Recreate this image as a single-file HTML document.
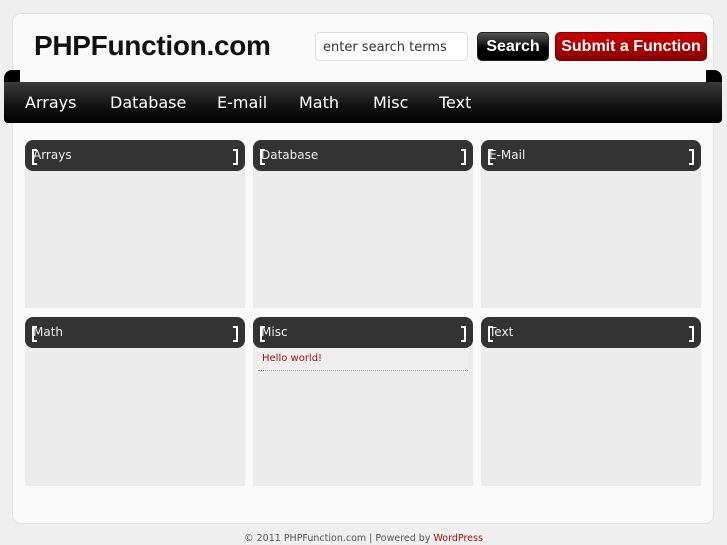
<!DOCTYPE html>
<html><head><style>
*{margin:0;padding:0;box-sizing:border-box}
body{width:727px;height:545px;background:#efefef;font-family:"DejaVu Sans","Liberation Sans",sans-serif;position:relative;overflow:hidden}
.wrap{position:absolute;left:12px;top:13px;width:702px;height:511px;background:#fafafa;border:1px solid #e2e2e2;border-radius:9px}
.logo{position:absolute;left:34px;top:30px;font-family:"Liberation Sans",sans-serif;font-size:28px;font-weight:bold;color:#111;letter-spacing:-0.3px}
.search{position:absolute;left:315px;top:32px;width:153px;height:29px;background:#fff;border:1px solid #ddd;border-radius:4px;font-size:13px;color:#333;padding:7px 0 0 7px}
.btn{position:absolute;top:32px;height:29px;border-radius:5px;color:#fff;font-weight:bold;font-size:16px;text-align:center;line-height:28px;font-family:"Liberation Sans",sans-serif;white-space:nowrap}
.b1{left:477px;width:72px;background:linear-gradient(#555,#000 60%);border:1px solid #222}
.b2{left:555px;width:152px;background:linear-gradient(#c00,#800);border:1px solid #700}
.flap{position:absolute;top:70px;height:20px;width:16px;background:#000}
.nav{position:absolute;left:4px;top:82px;width:718px;height:41px;background:linear-gradient(#3a3a3a,#111 60%,#000);border-radius:0 0 4px 4px}
.nav span{position:absolute;top:11px;color:#fff;font-size:16px}
.p{position:absolute;width:220px;background:#ececec;border-radius:8px 8px 0 0}
.h{height:31px;background:#333;border-radius:8px;color:#eee;font-size:12px;padding:8px 0 0 8px;position:relative}
.h:before{content:"";position:absolute;left:7px;top:9px;width:3px;height:12px;border:2px solid #fff;border-right:none}
.h:after{content:"";position:absolute;right:7px;top:9px;width:3px;height:12px;border:2px solid #fff;border-left:none}
</style></head><body>
<div class="wrap"></div>
<div class="logo">PHPFunction.com</div>
<div class="search">enter search terms</div>
<div class="btn b1">Search</div>
<div class="btn b2">Submit a Function</div>
<div class="flap" style="left:4px;border-radius:8px 0 0 0"></div>
<div class="flap" style="left:706px;border-radius:0 8px 0 0"></div>
<div class="nav">
<span style="left:21px">Arrays</span><span style="left:106px">Database</span><span style="left:213px">E-mail</span><span style="left:295px">Math</span><span style="left:369px">Misc</span><span style="left:435px">Text</span>
</div>
<div class="p" style="left:25px;top:140px;height:168px"><div class="h">Arrays</div></div>
<div class="p" style="left:253px;top:140px;height:168px"><div class="h">Database</div></div>
<div class="p" style="left:481px;top:140px;height:168px"><div class="h">E-Mail</div></div>
<div class="p" style="left:25px;top:317px;height:169px"><div class="h">Math</div></div>
<div class="p" style="left:253px;top:317px;height:169px"><div class="h">Misc</div>
<div style="font-size:10px;color:#a01010;padding:5px 0 0 4px;height:23px;background:#efefef;border-bottom:1px dotted #999;margin:0 5px">Hello world!</div></div>
<div class="p" style="left:481px;top:317px;height:169px"><div class="h">Text</div></div>
<div style="position:absolute;top:533px;left:0;width:727px;text-align:center;font-size:9.5px;color:#555">© 2011 PHPFunction.com | Powered by <span style="color:#a01010">WordPress</span></div>
</body></html>
